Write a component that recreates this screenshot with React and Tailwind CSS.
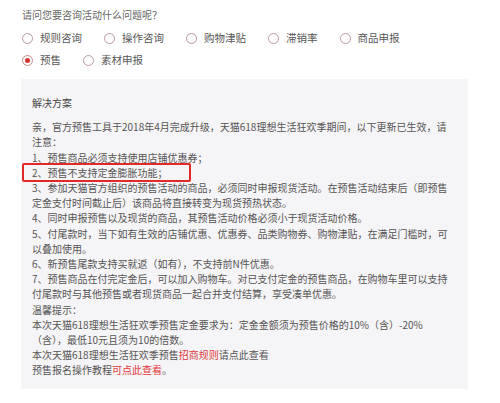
import React, { useState } from "react";

const options = [
  ["规则咨询", "操作咨询", "购物津贴", "滞销率", "商品申报"],
  ["预售", "素材申报"],
];

function Radio({ label, checked, onClick }) {
  return (
    <button type="button" onClick={onClick} className="flex items-center gap-[7px]">
      <span
        className={
          "w-[11px] h-[11px] rounded-full border flex items-center justify-center " +
          (checked ? "border-[#c98a8a]" : "border-[#b99a9c]")
        }
      >
        {checked && <span className="w-[5px] h-[5px] rounded-full bg-[#d8312e]"></span>}
      </span>
      <span className="text-[10.5px] text-[#555]">{label}</span>
    </button>
  );
}

export default function App() {
  const [picked, setPicked] = useState("预售");

  return (
    <div
      className="w-[500px] h-[403px] bg-white overflow-hidden pt-[8px]"
      style={{ fontFamily: '"Noto Sans CJK SC", "Noto Sans", sans-serif' }}
    >
      {/* question + options */}
      <div className="pl-[22px] text-[10px] leading-[14px] text-[#666]">请问您要咨询活动什么问题呢？</div>
      <div className="pl-[22px] mt-[9px] flex flex-col gap-[8px]">
        {options.map((row, i) => (
          <div key={i} className="flex items-center gap-[22px] h-[14px]">
            {row.map((o) => (
              <Radio key={o} label={o} checked={picked === o} onClick={() => setPicked(o)} />
            ))}
          </div>
        ))}
      </div>

      {/* answer box */}
      <div className="ml-[21px] mt-[12px] w-[447px] h-[310px] bg-[#f5f4f6] pl-[11px] pt-[16px] text-[10px] text-[#555] leading-[15.2px] whitespace-nowrap">
        <div className="mb-[9px] text-[#444]">解决方案</div>
        <div>亲，官方预售工具于2018年4月完成升级，天猫618理想生活狂欢季期间，以下更新已生效，请</div>
        <div>注意：</div>
        <div>1、预售商品必须支持使用店铺优惠券；</div>
        <div className="relative">
          2、预售不支持定金膨胀功能；
          <span className="absolute left-[-10px] top-[-2px] w-[169px] h-[19px] border-2 border-[#e02a2a] rounded-[2px]"></span>
        </div>
        <div>3、参加天猫官方组织的预售活动的商品，必须同时申报现货活动。在预售活动结束后（即预售</div>
        <div>定金支付时间截止后）该商品将直接转变为现货预热状态。</div>
        <div>4、同时申报预售以及现货的商品，其预售活动价格必须小于现货活动价格。</div>
        <div>5、付尾款时，当下如有生效的店铺优惠、优惠券、品类购物券、购物津贴，在满足门槛时，可</div>
        <div>以叠加使用。</div>
        <div>6、新预售尾款支持买就返（如有），不支持前N件优惠。</div>
        <div>7、预售商品在付完定金后，可以加入购物车。对已支付定金的预售商品，在购物车里可以支持</div>
        <div>付尾款时与其他预售或者现货商品一起合并支付结算，享受凑单优惠。</div>
        <div>温馨提示：</div>
        <div>本次天猫618理想生活狂欢季预售定金要求为：定金金额须为预售价格的10%（含）-20%</div>
        <div>（含），最低10元且须为10的倍数。</div>
        <div>
          本次天猫618理想生活狂欢季预售<span className="text-[#e0383d]">招商规则</span>请点此查看
        </div>
        <div>
          预售报名操作教程<span className="text-[#e0383d]">可点此查看</span>。
        </div>
      </div>
    </div>
  );
}
